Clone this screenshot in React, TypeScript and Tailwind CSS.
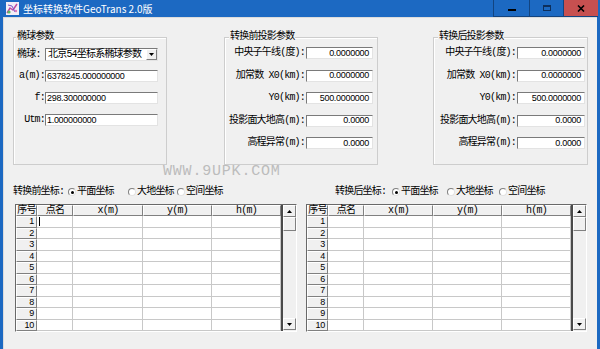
import React from "react";

const UI = "[font-family:'Liberation_Mono','Noto_Sans_CJK_SC',monospace] text-[10px] tracking-[-0.8px] text-black leading-none";
const NUM = "[font-family:'Liberation_Sans',sans-serif] text-[9px] tracking-[-0.3px] text-black leading-none";

const sunken = "border border-t-[#7a7a7a] border-l-[#7a7a7a] border-r-[#e3e3e3] border-b-[#e3e3e3]";
const raised = "border border-t-white border-l-white border-r-[#808080] border-b-[#808080] bg-[#f0f0f0]";

const TextBox = ({ value, right = false, className = "" }: { value: string; right?: boolean; className?: string }) => (
  <div className={`h-full bg-white flex items-center ${sunken} ${right ? "justify-end pr-[3px]" : "pl-[1px]"} ${className}`}>
    <span className={NUM}>{value}</span>
  </div>
);

const Arrow = ({ down = false }: { down?: boolean }) => (
  <svg width="5" height="3" viewBox="0 0 5 3">
    <polygon points={down ? "0,0 5,0 2.5,3" : "0,3 5,3 2.5,0"} fill="#000" />
  </svg>
);

const Group = ({ title, titleLeft, className, children }: { title: string; titleLeft: string; className: string; children: React.ReactNode }) => (
  <div className={`relative h-[128px] border border-[#cdcdcd] shadow-[inset_1px_1px_0_#fff] ${className}`}>
    <span className={`absolute top-[-6px] ${titleLeft} bg-[#f0f0f0] px-[1px] ${UI}`}>{title}</span>
    {children}
  </div>
);

const projRows = [
  ["中央子午线(度):", "0.0000000"],
  ["加常数 X0(km):", "0.0000000"],
  ["Y0(km):", "500.0000000"],
  ["投影面大地高(m):", "0.0000"],
  ["高程异常(m):", "0.0000"],
];

const ProjRows = ({ labelW, boxW }: { labelW: string; boxW: string }) => (
  <div className="flex flex-col pt-[9px] gap-[10.5px]">
    {projRows.map(([label, value]) => (
      <div key={label} className="flex h-[12px] items-center">
        <div className={`${labelW} text-right pr-[1px] whitespace-nowrap ${UI}`}>{label}</div>
        <TextBox value={value} right className={boxW} />
      </div>
    ))}
  </div>
);

const Radio = ({ label, checked, w }: { label: string; checked?: boolean; w: string }) => (
  <div className={`flex items-center ${w}`}>
    <div className="w-[8px] h-[8px] rounded-full bg-white border border-t-[#808080] border-l-[#808080] border-r-[#e3e3e3] border-b-[#e3e3e3] flex items-center justify-center">
      {checked && <div className="w-[3px] h-[3px] rounded-full bg-black" />}
    </div>
    <span className={`ml-[1px] ${UI}`}>{label}</span>
  </div>
);

const Table = ({ cols, caret }: { cols: string; caret?: boolean }) => {
  const rows = Array.from({ length: 10 }, (_, i) => i + 1);
  return (
    <div className="h-[128px] flex border border-t-[#696969] border-l-[#696969] border-r-white border-b-white bg-[#f0f0f0]">
      <div className={`grid ${cols} grid-rows-[11px_repeat(10,11.5px)] bg-white`}>
        <div className={`${raised} flex items-center justify-center ${UI}`}>序号</div>
        <div className={`${raised} flex items-center justify-center ${UI}`}>点名</div>
        <div className={`${raised} flex items-center justify-center ${UI}`}>x(m)</div>
        <div className={`${raised} flex items-center justify-center ${UI}`}>y(m)</div>
        <div className={`${raised} flex items-center justify-center ${UI}`}>h(m)</div>
        {rows.map((n) => (
          <React.Fragment key={n}>
            <div className={`${raised} flex items-center justify-end pr-[2px]`}>
              <span className={NUM}>{n}</span>
            </div>
            <div className="border-r border-b border-[#c8c8c8] flex items-center">
              {caret && n === 1 && <div className="ml-[2px] w-[1px] h-[9px] bg-black" />}
            </div>
            <div className="border-r border-b border-[#c8c8c8]" />
            <div className="border-r border-b border-[#c8c8c8]" />
            <div className="border-r border-b border-[#c8c8c8]" />
          </React.Fragment>
        ))}
      </div>
      <div className="w-[2px] bg-[#4a4a4a]" />
      <div className="w-[13px] flex flex-col">
        <div className={`h-[12px] ${raised} flex items-center justify-center`}>
          <Arrow />
        </div>
        <div className={`h-[14px] ${raised}`} />
        <div className="flex-1" />
        <div className={`h-[12px] mb-[1px] ${raised} flex items-center justify-center`}>
          <Arrow down />
        </div>
      </div>
    </div>
  );
};

const TitleBar = () => (
  <div className="h-[17px] flex items-center shrink-0">
    <svg className="ml-[6px]" width="13" height="13" viewBox="0 0 13 13">
      <rect x="0" y="0" width="13" height="13" fill="#f4eef6" />
      <polyline points="1,11 4,6 7,8 11,2" fill="none" stroke="#c04aa0" strokeWidth="1.5" />
      <polyline points="2,3 6,4 9,10" fill="none" stroke="#7a55c8" strokeWidth="1" />
      <circle cx="3" cy="10" r="1.6" fill="#5cb85c" />
      <circle cx="10" cy="9" r="1.2" fill="#e07ab8" />
    </svg>
    <span className="ml-[4px] text-white text-[10px] leading-none [font-family:'Noto_Sans_CJK_SC',sans-serif]">
      坐标转换软件GeoTrans 2.0版
    </span>
    <div className="flex-1" />
    <div className="self-start flex h-[17px] mr-[2px]">
      <div className="w-[36px] border-l border-b border-[#124480] flex items-center justify-center">
        <div className="w-[8px] h-[2px] bg-black mt-[4px]" />
      </div>
      <div className="w-[34px] border-l border-b border-[#124480] flex items-center justify-center">
        <div className="w-[8px] h-[6px] border border-t-2 border-[#0d2f5c]" />
      </div>
      <div className="w-[35px] border-l border-b border-[#124480] bg-[#c75050] flex items-center justify-center">
        <svg width="8" height="7" viewBox="0 0 8 7">
          <path d="M1 0.5 L7 6.5 M7 0.5 L1 6.5" stroke="#000" strokeWidth="1.6" />
        </svg>
      </div>
    </div>
  </div>
);

export default function App() {
  return (
    <div className="w-[600px] h-[349px] bg-[#1c69c2] flex flex-col overflow-hidden">
      <TitleBar />
      <div className="flex-1 ml-[3px] mr-[3px] border-l border-t border-[#dcdcdc] bg-[#f0f0f0] flex flex-col">
        {/* parameter groups */}
        <div className="flex items-start pt-[19px]">
          <Group title="椭球参数" titleLeft="left-[2px]" className="ml-[9px] w-[154px]">
            <div className="flex flex-col pt-[10px] pl-[3px]">
              <div className="flex h-[13px] items-center">
                <div className={`w-[28px] ${UI}`}>椭球:</div>
                <div className={`w-[113px] h-full bg-white flex items-center ${sunken}`}>
                  <span className={`pl-[2px] flex-1 whitespace-nowrap ${UI}`}>北京54坐标系椭球参数</span>
                  <div className={`w-[11px] h-[11px] ${raised} flex items-center justify-center`}>
                    <Arrow down />
                  </div>
                </div>
              </div>
              <div className="flex flex-col gap-[10px] mt-[9px]">
                {[
                  ["a(m):", "6378245.000000000"],
                  ["f:", "298.300000000"],
                  ["Utm:", "1.000000000"],
                ].map(([label, value]) => (
                  <div key={label} className="flex h-[12px] items-center">
                    <div className={`w-[28px] text-right ${UI}`}>{label}</div>
                    <TextBox value={value} className="w-[113px]" />
                  </div>
                ))}
              </div>
            </div>
          </Group>
          <Group title="转换前投影参数" titleLeft="left-[4px]" className="ml-[57px] w-[154px]">
            <ProjRows labelW="w-[81px]" boxW="w-[67px]" />
          </Group>
          <Group title="转换后投影参数" titleLeft="left-[4px]" className="ml-[55px] w-[155px]">
            <ProjRows labelW="w-[83px]" boxW="w-[68px]" />
          </Group>
        </div>

        {/* watermark */}
        <div className="h-[13px] pl-[159px] text-[15px] tracking-[0.8px] leading-[13px] text-[#bcbcbc] [font-family:'Liberation_Mono',monospace]">
          WWW.9UPK.COM
        </div>

        {/* coordinate tables */}
        <div className="flex">
          <div className="ml-[9px] w-[284px] flex flex-col">
            <div className="mt-[8px] h-[12px] flex items-center">
              <div className={`w-[55px] ${UI}`}>转换前坐标:</div>
              <Radio label="平面坐标" checked w="w-[60px]" />
              <Radio label="大地坐标" w="w-[49px]" />
              <Radio label="空间坐标" w="w-[60px]" />
            </div>
            <div className="mt-[6px] ml-[2px] w-[282px]">
              <Table cols="grid-cols-[21px_36px_70px_69px_69px]" caret />
            </div>
          </div>
          <div className="ml-[9px] w-[281px] flex flex-col">
            <div className="mt-[8px] h-[12px] pl-[29px] flex items-center">
              <div className={`w-[57px] ${UI}`}>转换后坐标:</div>
              <Radio label="平面坐标" checked w="w-[55px]" />
              <Radio label="大地坐标" w="w-[52px]" />
              <Radio label="空间坐标" w="w-[60px]" />
            </div>
            <div className="mt-[6px] w-[281px]">
              <Table cols="grid-cols-[21px_36px_69px_69px_69px]" />
            </div>
          </div>
        </div>
      </div>
    </div>
  );
}
